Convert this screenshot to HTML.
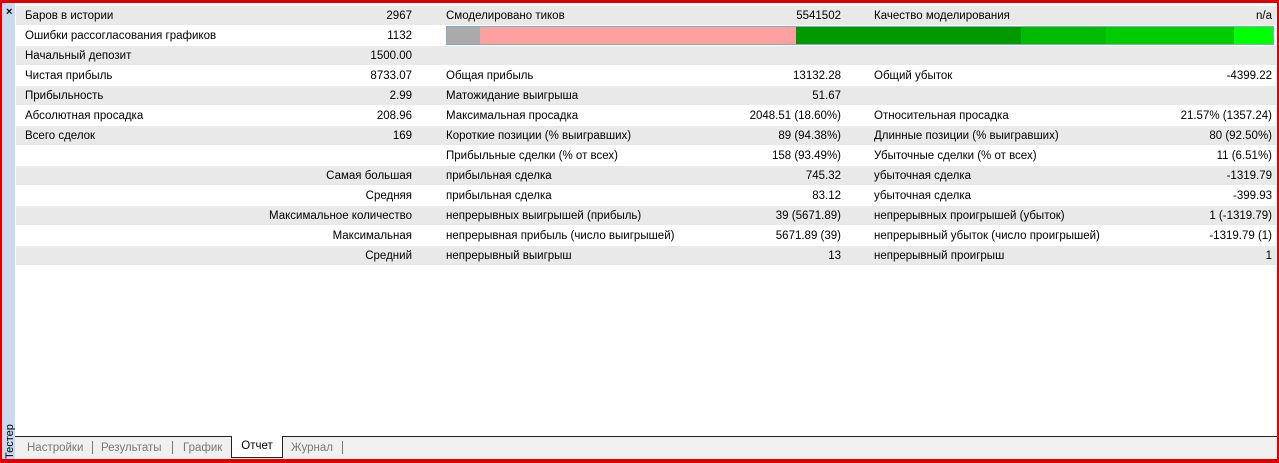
<!DOCTYPE html>
<html><head><meta charset="utf-8"><style>
*{margin:0;padding:0;box-sizing:border-box}
body{width:1279px;height:463px;background:#e00000;position:relative;overflow:hidden;font-family:"Liberation Sans","DejaVu Sans",sans-serif;font-size:11.5px;color:#000}
#side{position:absolute;left:2px;top:3px;width:13px;height:456px;background:#c9d9ee}
#x{position:absolute;left:4px;top:3px;font-size:11px;font-weight:bold}
#vt{position:absolute;left:-12px;top:430px;transform:rotate(-90deg);font-size:11px;width:40px}
#main{position:absolute;left:15px;top:3px;width:1262px;height:456px;background:#fff}
.r{position:absolute;left:1px;width:1260px;height:20px;line-height:21px;border-bottom:1px solid #fff}
.g{background:#e9e9e9}
.t{position:absolute;white-space:nowrap}
.rt{text-align:right}
#tabs{position:absolute;left:0;top:433px;width:1262px;height:23px;background:#f0f0f0;border-top:1px solid #222}
.tab{position:absolute;top:5px;color:#777;font-size:11.5px}
.sep{position:absolute;top:4px;width:1px;height:13px;background:#777}
#act{position:absolute;left:216px;top:-1px;width:52px;height:22px;background:#fff;border:1px solid #222;border-top:none;text-align:center;line-height:20px}
</style></head><body>
<div id="side"><div id="x">×</div><div id="vt">Тестер</div></div>
<div id="main">
<div class="r g" style="top:3px"><span class="t" style="left:9px">Баров в истории</span><span class="t rt" style="right:864px">2967</span><span class="t" style="left:430px">Смоделировано тиков</span><span class="t rt" style="right:435px">5541502</span><span class="t" style="left:858px">Качество моделирования</span><span class="t rt" style="right:4px">n/a</span></div>
<div class="r" style="top:23px"><span class="t" style="left:9px">Ошибки рассогласования графиков</span><span class="t rt" style="right:864px">1132</span>
<div style="position:absolute;left:430px;top:0px;width:828px;height:19px;border:1px solid #7fb0c0;display:flex">
<div style="width:33px;background:#aaa"></div><div style="width:316px;background:#ffa0a0"></div><div style="width:225px;background:#009a00"></div><div style="width:85px;background:#00bb00"></div><div style="width:128px;background:#00cc00"></div><div style="flex:1;background:#00ff00"></div></div></div>
<div class="r g" style="top:43px"><span class="t" style="left:9px">Начальный депозит</span><span class="t rt" style="right:864px">1500.00</span></div>
<div class="r" style="top:63px"><span class="t" style="left:9px">Чистая прибыль</span><span class="t rt" style="right:864px">8733.07</span><span class="t" style="left:430px">Общая прибыль</span><span class="t rt" style="right:435px">13132.28</span><span class="t" style="left:858px">Общий убыток</span><span class="t rt" style="right:4px">-4399.22</span></div>
<div class="r g" style="top:83px"><span class="t" style="left:9px">Прибыльность</span><span class="t rt" style="right:864px">2.99</span><span class="t" style="left:430px">Матожидание выигрыша</span><span class="t rt" style="right:435px">51.67</span></div>
<div class="r" style="top:103px"><span class="t" style="left:9px">Абсолютная просадка</span><span class="t rt" style="right:864px">208.96</span><span class="t" style="left:430px">Максимальная просадка</span><span class="t rt" style="right:435px">2048.51 (18.60%)</span><span class="t" style="left:858px">Относительная просадка</span><span class="t rt" style="right:4px">21.57% (1357.24)</span></div>
<div class="r g" style="top:123px"><span class="t" style="left:9px">Всего сделок</span><span class="t rt" style="right:864px">169</span><span class="t" style="left:430px">Короткие позиции (% выигравших)</span><span class="t rt" style="right:435px">89 (94.38%)</span><span class="t" style="left:858px">Длинные позиции (% выигравших)</span><span class="t rt" style="right:4px">80 (92.50%)</span></div>
<div class="r" style="top:143px"><span class="t" style="left:430px">Прибыльные сделки (% от всех)</span><span class="t rt" style="right:435px">158 (93.49%)</span><span class="t" style="left:858px">Убыточные сделки (% от всех)</span><span class="t rt" style="right:4px">11 (6.51%)</span></div>
<div class="r g" style="top:163px"><span class="t rt" style="right:864px">Самая большая</span><span class="t" style="left:430px">прибыльная сделка</span><span class="t rt" style="right:435px">745.32</span><span class="t" style="left:858px">убыточная сделка</span><span class="t rt" style="right:4px">-1319.79</span></div>
<div class="r" style="top:183px"><span class="t rt" style="right:864px">Средняя</span><span class="t" style="left:430px">прибыльная сделка</span><span class="t rt" style="right:435px">83.12</span><span class="t" style="left:858px">убыточная сделка</span><span class="t rt" style="right:4px">-399.93</span></div>
<div class="r g" style="top:203px"><span class="t rt" style="right:864px">Максимальное количество</span><span class="t" style="left:430px">непрерывных выигрышей (прибыль)</span><span class="t rt" style="right:435px">39 (5671.89)</span><span class="t" style="left:858px">непрерывных проигрышей (убыток)</span><span class="t rt" style="right:4px">1 (-1319.79)</span></div>
<div class="r" style="top:223px"><span class="t rt" style="right:864px">Максимальная</span><span class="t" style="left:430px">непрерывная прибыль (число выигрышей)</span><span class="t rt" style="right:435px">5671.89 (39)</span><span class="t" style="left:858px">непрерывный убыток (число проигрышей)</span><span class="t rt" style="right:4px">-1319.79 (1)</span></div>
<div class="r g" style="top:243px"><span class="t rt" style="right:864px">Средний</span><span class="t" style="left:430px">непрерывный выигрыш</span><span class="t rt" style="right:435px">13</span><span class="t" style="left:858px">непрерывный проигрыш</span><span class="t rt" style="right:4px">1</span></div>
<div id="tabs">
<span class="tab" style="left:12px">Настройки</span><span class="sep" style="left:77px"></span>
<span class="tab" style="left:86px">Результаты</span><span class="sep" style="left:157px"></span>
<span class="tab" style="left:168px">График</span>
<div id="act">Отчет</div>
<span class="tab" style="left:276px">Журнал</span><span class="sep" style="left:327px"></span>
</div>
</div>
</body></html>
